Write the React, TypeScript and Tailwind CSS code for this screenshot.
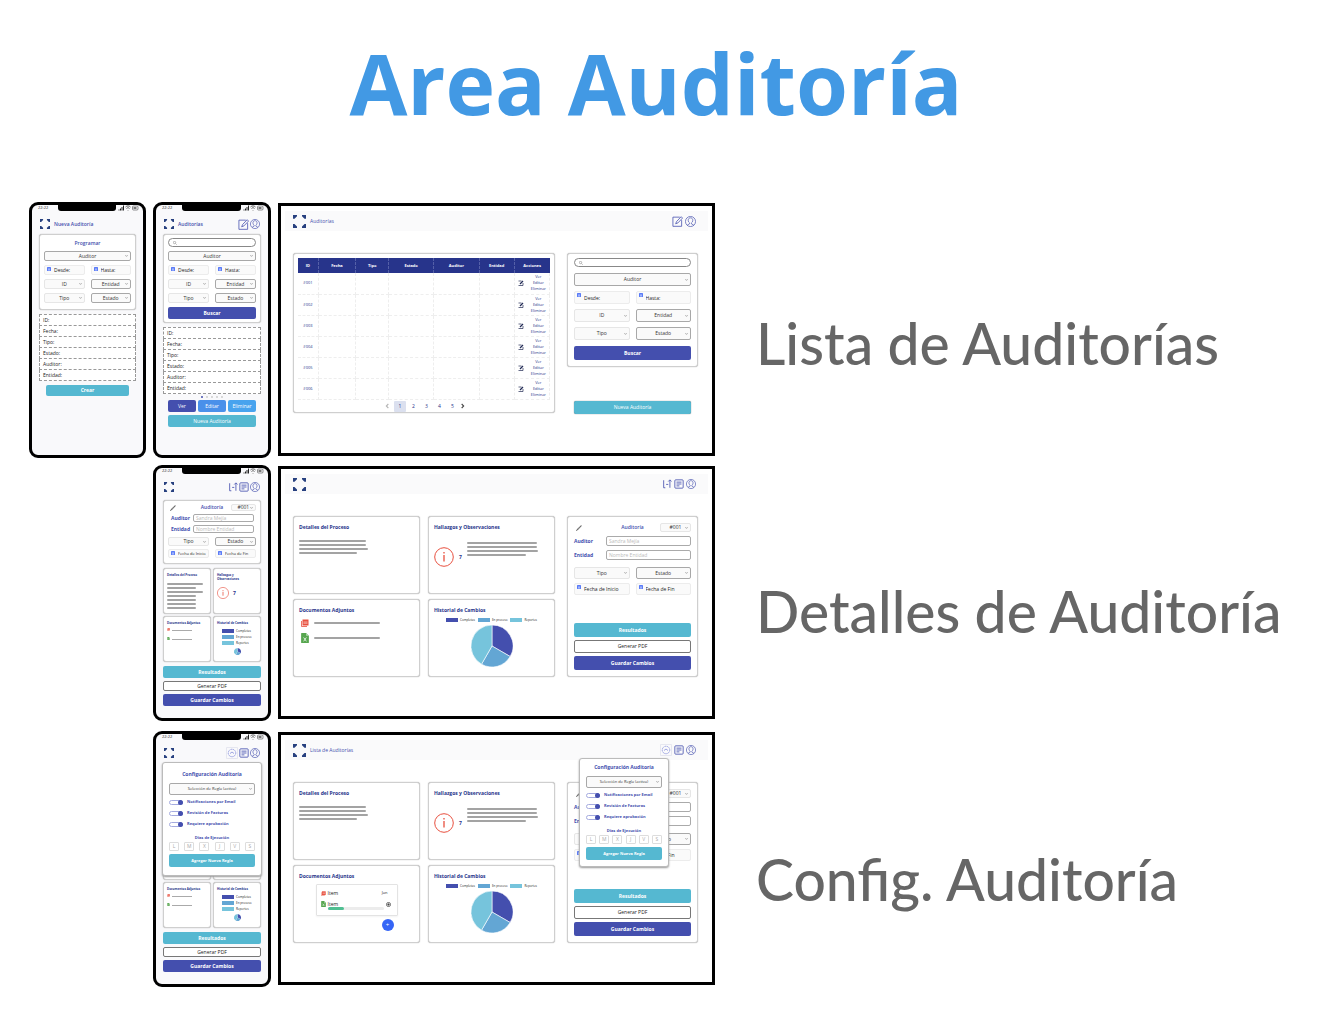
import React, { useId } from "react";

/* ---------- icons ---------- */

function Logo({ className }: { className: string }) {
  return (
    <svg viewBox="0 0 26 26" className={className} fill="#27407f" aria-hidden="true">
      <path d="M0 0h8v2.500L3 7.500H0z M18 0h8v7.500h-3L18 2.500z M0 18h3l5 5v3H0z M26 18h-3l-5 5v3h8z" />
    </svg>
  );
}

function EditIcon({ className }: { className: string }) {
  return (
    <svg viewBox="0 0 24 24" className={className} fill="none" stroke="currentColor" strokeWidth="1.700" aria-hidden="true">
      <path d="M17 2.500H2v20h19V9M8 17l2-5L20 1.500l3 3L13 15z" />
    </svg>
  );
}

function RowEditIcon({ className }: { className: string }) {
  return (
    <svg viewBox="0 0 12 12" className={className} fill="none" stroke="#222b55" strokeWidth="1.400" aria-hidden="true">
      <path d="M1 2h6M1 11h9V6" />
      <path d="M4 8l6-6" strokeWidth="2.500" />
    </svg>
  );
}

function UserIcon({ className }: { className: string }) {
  return (
    <svg viewBox="0 0 24 24" className={className} fill="none" stroke="currentColor" strokeWidth="1.500" aria-hidden="true">
      <circle cx="12" cy="12" r="11" />
      <path d="M12 4c-3 0-5 2.200-5 5.500 0 2.500 1 4.500 3 5.500v2l-5 3M12 4c3 0 5 2.200 5 5.500 0 2.500-1 4.500-3 5.500v2l5 3" />
    </svg>
  );
}

function DocIcon({ className }: { className: string }) {
  return (
    <svg viewBox="0 0 24 24" className={className} fill="none" stroke="currentColor" strokeWidth="2" aria-hidden="true">
      <rect x="2" y="2" width="20" height="20" rx="2" />
      <path d="M6 7.500h12M6 12h12M6 16.500h7" />
    </svg>
  );
}

function FlowIcon({ className }: { className: string }) {
  return (
    <svg viewBox="0 0 24 24" className={className} fill="none" stroke="currentColor" strokeWidth="2" aria-hidden="true">
      <path d="M4 3v18h4M10 13h5M19 21V3M15 6l4-4 4 4" />
    </svg>
  );
}

function GaugeIcon({ className }: { className: string }) {
  return (
    <svg viewBox="0 0 24 24" className={className} fill="none" stroke="#7c86d8" strokeWidth="1.500" aria-hidden="true">
      <rect x="0.700" y="0.700" width="22.600" height="22.600" rx="2" stroke="#d9dbe8" />
      <circle cx="12" cy="12" r="7.500" strokeDasharray="3 1" />
      <path d="M8 13l4-3 4 3" />
    </svg>
  );
}

function PencilIcon({ className }: { className: string }) {
  return (
    <svg viewBox="0 0 12 12" className={className} fill="none" stroke="#333" strokeWidth="1.300" aria-hidden="true">
      <path d="M1 11l1-2L10.500 1l.500.500-8 8.500z" />
    </svg>
  );
}

function Chevron({ className }: { className: string }) {
  return (
    <svg viewBox="0 0 8 6" className={className} fill="none" stroke="#444" strokeWidth="1.600" aria-hidden="true">
      <path d="M1 1l3 3 3-3" />
    </svg>
  );
}

function InfoIcon({ className }: { className: string }) {
  return (
    <svg viewBox="0 0 20 20" className={className} fill="none" stroke="#e8503f" aria-hidden="true">
      <circle cx="10" cy="10" r="9.300" />
      <path d="M10 8v6.500M10 5v1.500" strokeWidth="1.300" />
    </svg>
  );
}

function PdfIcon({ className }: { className: string }) {
  return (
    <svg viewBox="0 0 16 16" className={className} aria-hidden="true">
      <path d="M1 4v11h11" fill="none" stroke="#e8503f" strokeWidth="1.600" />
      <path d="M3 1h12v12H3z" fill="#e8503f" />
      <path d="M5 6h8M5 8.500h8" stroke="#fff" strokeWidth="1" />
    </svg>
  );
}

function SheetIcon({ className }: { className: string }) {
  return (
    <svg viewBox="0 0 14 18" className={className} aria-hidden="true">
      <path d="M1 0h8l5 5v12a1 1 0 0 1-1 1H1a1 1 0 0 1-1-1V1a1 1 0 0 1 1-1z" fill="#57a64f" />
      <path d="M9 0v5h5z" fill="#b5dbb1" />
      <path d="M4.500 8l5 7M9.500 8l-5 7" stroke="#fff" strokeWidth="1.400" />
    </svg>
  );
}

function Pie({ className }: { className: string }) {
  return (
    <svg viewBox="-21 -21 42 42" className={className} stroke="#fff" strokeWidth="0.600" role="img" aria-label="Historial de cambios">
      <path d="M0 0V-21A21 21 0 0 1 18.200 10.500z" fill="#444fae" />
      <path d="M0 0L18.200 10.500A21 21 0 0 1-10.500 18.200z" fill="#63a6d4" />
      <path d="M0 0L-10.500 18.200A21 21 0 0 1 0-21z" fill="#76c4dc" />
    </svg>
  );
}

/* ---------- controls ---------- */

type FieldProps = { label: string; className?: string; strong?: boolean };

function Select({ label, className = "h-[10px]", strong = false }: FieldProps) {
  return (
    <div className={`relative min-w-0 ${className}`}>
      <select
        aria-label={label}
        className={`block h-full w-full appearance-none rounded-[2px] border bg-[#fafafa] px-1 text-[5px] leading-none text-[#333] [text-align-last:center] ${
          strong ? "border-[#a8a8a8]" : "border-[#e6e6e6]"
        }`}
      >
        <option>{label}</option>
      </select>
      <Chevron className="pointer-events-none absolute top-1/2 right-[3px] h-[2px] w-[3px] -translate-y-1/2" />
    </div>
  );
}

function DateField({ label, className = "h-[10px]" }: FieldProps) {
  return (
    <label className={`flex min-w-0 items-center gap-[3px] rounded-[2px] border border-[#ececec] bg-[#fafafa] pl-[2px] ${className}`}>
      <svg viewBox="0 0 8 8" className="mt-px h-1 w-1 shrink-0 self-start" aria-hidden="true">
        <rect width="8" height="8" rx="1" fill="#5b7cf7" />
        <path d="M2 4h4M2 6h4" stroke="#fff" />
      </svg>
      <input
        type="text"
        aria-label={label}
        placeholder={label}
        className="w-full min-w-0 bg-transparent leading-none placeholder:text-[#222]"
      />
    </label>
  );
}

function Search() {
  return (
    <label className="flex h-[9px] items-center rounded-full border border-[#888] bg-white pl-1">
      <svg viewBox="0 0 8 8" className="h-1 w-1 shrink-0" fill="none" stroke="#777" aria-hidden="true">
        <circle cx="3" cy="3" r="2.400" />
        <path d="M5 5l2.500 2.500" />
      </svg>
      <input type="search" aria-label="Buscar" className="w-full min-w-0 bg-transparent text-[5px] leading-none" />
    </label>
  );
}

function Button({
  tone,
  className = "h-3",
  children,
}: {
  tone: "indigo" | "teal" | "plainTeal" | "line" | "plainIndigo" | "blue" | "sky";
  className?: string;
  children: React.ReactNode;
}) {
  const tones = {
    indigo: "bg-[#444fae] font-bold text-white",
    plainIndigo: "bg-[#444fae] text-white",
    teal: "bg-[#55b8d1] font-bold text-white",
    plainTeal: "bg-[#55b8d1] font-medium text-white",
    line: "border border-[#777] bg-white text-[#222]",
    blue: "bg-[#4a90ea] text-white",
    sky: "bg-[#48a3ee] text-white",
  };
  return (
    <button type="button" className={`flex min-w-0 items-center justify-center rounded-[2px] text-[5px] leading-none ${tones[tone]} ${className}`}>
      {children}
    </button>
  );
}

function Card({ className = "", children }: { className?: string; children: React.ReactNode }) {
  return <section className={`min-w-0 rounded-[3px] border border-[#cfcfcf] bg-white shadow-[0_0_1px_#999] ${className}`}>{children}</section>;
}

function NamedInput({ label, placeholder, narrow }: { label: string; placeholder: string; narrow?: boolean }) {
  const id = useId();
  return (
    <div className="flex items-center">
      <label htmlFor={id} className={`shrink-0 text-[5px] leading-none font-bold text-[#444fae] ${narrow ? "w-[25px] text-center" : "w-8"}`}>
        {label}
      </label>
      <input
        id={id}
        type="text"
        placeholder={placeholder}
        className={`w-full min-w-0 rounded-[2px] border border-[#aaa] bg-white px-[2px] text-[5px] leading-none placeholder:text-[#bbb] ${narrow ? "mr-[2px] h-2" : "h-[10px]"}`}
      />
    </div>
  );
}

/* ---------- frames ---------- */

function Phone({ time, children }: { time: string; children: React.ReactNode }) {
  return (
    <article className="relative min-h-64 min-w-0 rounded-[9px] border-[3px] border-black bg-[#f9f9fb]">
      <div className="flex h-[6px] items-start justify-between pr-1 pl-[6px] text-[4px] leading-[6px] text-[#222]">
        <span className="w-5">{time}</span>
        <span className="h-[6px] flex-1 rounded-b-[3px] bg-black" />
        <svg viewBox="0 0 42 12" className="ml-[2px] h-[6px] w-[21px]" fill="none" stroke="#222" aria-hidden="true">
          <path d="M2 11V9M5 11V7M8 11V4M11 11V1" strokeWidth="2" />
          <path d="M15 4c3-3 7-3 10 0M17 7c2-2 4-2 6 0M20 10v1" strokeWidth="1.400" />
          <rect x="29" y="2" width="11" height="8" rx="2" />
          <path d="M31 6h6" strokeWidth="4" stroke="#777" />
        </svg>
      </div>
      {children}
    </article>
  );
}

function PhoneHeader({ title, children }: { title?: string; children?: React.ReactNode }) {
  return (
    <header className="flex h-[23px] items-center px-2 pt-[3px] text-[#444fae]">
      <Logo className="h-[10px] w-[10px]" />
      {title && <h3 className="ml-1 text-[5px] leading-none font-semibold">{title}</h3>}
      <div className="ml-auto flex items-center gap-[1px]">{children}</div>
    </header>
  );
}

function Desktop({ title, icons, children }: { title?: string; icons: React.ReactNode; children: React.ReactNode }) {
  return (
    <article className="relative mt-px min-h-[253px] min-w-0 self-start border-[3px] border-black bg-white px-1 pt-[5px]">
      <header className="flex h-5 items-center bg-[#fafafb] pr-3 pl-2 text-[#444fae]">
        <Logo className="h-[13px] w-[13px]" />
        {title && <h3 className="ml-1 text-[5px] leading-none">{title}</h3>}
        <div className="ml-auto flex items-center gap-[2px]">{icons}</div>
      </header>
      {children}
    </article>
  );
}

/* ---------- audits list ---------- */

function Filters({ wide }: { wide?: boolean }) {
  const h = wide ? "h-[13px] text-[5px]" : "h-[10px] text-[5px]";
  return (
    <div className={wide ? "flex flex-col gap-[5px]" : "flex flex-col gap-1"}>
      <Select label="Auditor" className={h} strong />
      <div className={wide ? "grid grid-cols-2 gap-x-[6px] gap-y-[5px]" : "grid grid-cols-2 gap-x-[6px] gap-y-1"}>
        <DateField label="Desde:" className={h} />
        <DateField label="Hasta:" className={h} />
        <Select label="ID" className={h} />
        <Select label="Entidad" className={h} strong />
        <Select label="Tipo" className={h} />
        <Select label="Estado" className={h} strong />
      </div>
    </div>
  );
}

function RecordTable() {
  return (
    <table className="mx-[7px] mt-1 w-[calc(100%-14px)] border-collapse bg-white text-left text-[5px] leading-[10px] text-[#222]">
      <tbody>
        {["ID:", "Fecha:", "Tipo:", "Estado:", "Auditor:", "Entidad:"].map((row) => (
          <tr key={row}>
            <th scope="row" className="border border-dashed border-[#999] px-[3px] py-0 font-normal">
              {row}
            </th>
          </tr>
        ))}
      </tbody>
    </table>
  );
}

function NewAuditPhone() {
  return (
    <Phone time="22:22">
      <PhoneHeader title="Nueva Auditoría" />
      <Card className="mx-[7px] px-1 pb-[6px]">
        <h4 className="py-[5px] text-center text-[5px] leading-[6px] font-semibold text-[#444fae]">Programar</h4>
        <Filters />
      </Card>
      <RecordTable />
      <Button tone="teal" className="mx-[14px] mt-1 h-[11px] w-[calc(100%-28px)]">
        Crear
      </Button>
    </Phone>
  );
}

function AuditsPhone() {
  return (
    <Phone time="22:22">
      <PhoneHeader title="Auditorías">
        <EditIcon className="h-[11px] w-[11px]" />
        <UserIcon className="h-[10px] w-[10px]" />
      </PhoneHeader>
      <Card className="mx-[7px] flex flex-col gap-1 px-1 pt-[3px] pb-[3px]">
        <Search />
        <Filters />
        <Button tone="indigo">Buscar</Button>
      </Card>
      <RecordTable />
      <div className="flex h-[6px] items-center justify-center gap-[3px]">
        <span className="h-[2px] w-[2px] rounded-full bg-[#444fae]" />
        {[2, 3, 4, 5].map((n) => (
          <span key={n} className="h-[2px] w-[2px] rounded-full bg-[#ccc]" />
        ))}
      </div>
      <div className="mx-3 grid grid-cols-3 gap-x-[2px] gap-y-[3px]">
        <Button tone="plainIndigo">Ver</Button>
        <Button tone="blue">Editar</Button>
        <Button tone="sky">Eliminar</Button>
        <Button tone="plainTeal" className="col-span-3 h-3">
          Nueva Auditoría
        </Button>
      </div>
    </Phone>
  );
}

function AuditsDesktop() {
  const cols = ["ID", "Fecha", "Tipo", "Estado", "Auditor", "Entidad"];
  return (
    <Desktop
      title="Auditorías"
      icons={
        <>
          <EditIcon className="h-[11px] w-[11px]" />
          <UserIcon className="h-[11px] w-[11px]" />
        </>
      }
    >
      <div className="mr-[10px] ml-2 grid grid-cols-[2fr_1fr] items-start gap-3 pt-[22px]">
        <Card className="px-1 pt-1">
          <table className="w-full table-fixed border-collapse text-center text-[4px] leading-[6px] text-[#27348b]">
            <colgroup>
              <col className="w-[8%]" />
              <col className="w-[15%]" />
              <col className="w-[13%]" />
              <col className="w-[18%]" />
              <col className="w-[18%]" />
              <col className="w-[14%]" />
              <col className="w-[14%]" />
            </colgroup>
            <thead className="bg-[#27348b] text-white">
              <tr className="h-[15px]">
                {cols.map((c) => (
                  <th key={c} className="border-r border-dashed border-[#5560a8] font-bold">
                    {c}
                  </th>
                ))}
                <th className="font-bold">Acciones</th>
              </tr>
            </thead>
            <tbody>
              {["#001", "#002", "#003", "#004", "#005", "#006"].map((id) => (
                <tr key={id} className="h-[21px]">
                  {cols.map((c) => (
                    <td key={c} className="border-r border-b border-dashed border-[#eee]">
                      {c === "ID" ? id : ""}
                    </td>
                  ))}
                  <td className="border-r border-b border-dashed border-[#eee] p-0">
                    <div className="flex items-center justify-between px-[3px]">
                      <RowEditIcon className="h-[6px] w-[6px]" />
                      <ul>
                        <li>Ver</li>
                        <li>Editar</li>
                        <li>Eliminar</li>
                      </ul>
                    </div>
                  </td>
                </tr>
              ))}
            </tbody>
          </table>
          <nav aria-label="Páginas" className="mt-px flex items-center justify-center gap-[2px] text-[5px] leading-none text-[#27348b]">
            <button type="button" aria-label="Anterior" className="w-[10px]">
              <Chevron className="mx-auto h-1 w-[6px] rotate-90 opacity-40" />
            </button>
            <button type="button" className="h-[11px] w-3 rounded-[1px] bg-[#dbe0ef]">
              1
            </button>
            {["2", "3", "4", "5"].map((n) => (
              <button key={n} type="button" className="w-[11px]">
                {n}
              </button>
            ))}
            <button type="button" aria-label="Siguiente">
              <Chevron className="h-1 w-[6px] -rotate-90" />
            </button>
          </nav>
        </Card>
        <div className="min-w-0">
          <Card className="flex flex-col gap-[6px] px-[6px] pt-1 pb-[6px]">
            <Search />
            <Filters wide />
            <Button tone="indigo" className="h-[14px]">
              Buscar
            </Button>
          </Card>
          <Button tone="plainTeal" className="mx-[7px] mt-[34px] h-[13px] w-[calc(100%-14px)] shadow-[0_0_1px_#555]">
            Nueva Auditoría
          </Button>
        </div>
      </div>
    </Desktop>
  );
}

/* ---------- audit details ---------- */

function Lines({ widths, className = "" }: { widths: number[]; className?: string }) {
  return (
    <div className={`flex flex-col gap-[2px] ${className}`}>
      {widths.map((w, i) => (
        <span key={i} className="h-[2px] rounded-full bg-[#a3a3a3]" style={{ width: `${w}%` }} />
      ))}
    </div>
  );
}

function DetailsForm({ narrow }: { narrow?: boolean }) {
  const h = narrow ? "h-[9px] text-[4px]" : "h-3 text-[5px]";
  return (
    <div className={narrow ? "flex flex-col gap-[3px]" : "flex flex-col gap-1"}>
      <div className={narrow ? "grid h-[7px] grid-cols-3 items-center" : "grid h-[9px] grid-cols-3 items-center"}>
        <PencilIcon className="ml-[2px] h-[6px] w-[6px]" />
        <h4 className="text-center text-[5px] leading-none font-semibold text-[#444fae]">Auditoría</h4>
        <Select label="#001" className={narrow ? "ml-1 h-[7px]" : "ml-2 h-[9px]"} />
      </div>
      <NamedInput label="Auditor" placeholder="Sandra Mejía" narrow={narrow} />
      <NamedInput label="Entidad" placeholder="Nombre Entidad" narrow={narrow} />
      <div className={narrow ? "mt-px grid grid-cols-2 gap-x-[6px] gap-y-[3px]" : "mt-[3px] grid grid-cols-2 gap-x-[6px] gap-y-1"}>
        <Select label="Tipo" className={h} />
        <Select label="Estado" className={h} strong />
        <DateField label="Fecha de Inicio" className={h} />
        <DateField label="Fecha de Fin" className={h} />
      </div>
    </div>
  );
}

const LEGEND = [
  { name: "Completas", color: "bg-[#444fae]" },
  { name: "En proceso", color: "bg-[#63a6d4]" },
  { name: "Reportes", color: "bg-[#76c4dc]" },
];

function SmallTitle({ children }: { children: React.ReactNode }) {
  return <h4 className="text-[3px] leading-1 font-bold text-[#27348b]">{children}</h4>;
}

function DetailsPhone({ icons, children }: { icons: React.ReactNode; children?: React.ReactNode }) {
  return (
    <Phone time="22:22">
      <PhoneHeader>{icons}</PhoneHeader>
      {children}
      <div className="mx-[7px] mt-[3px]">
        <Card className="px-1 pt-[3px] pb-[5px]">
          <DetailsForm narrow />
        </Card>
        <div className="mt-1 grid auto-rows-[46px] grid-cols-2 gap-[2px]">
          <Card className="px-[3px] pt-1">
            <SmallTitle>Detalles del Proceso</SmallTitle>
            <Lines widths={[90, 72, 90, 72, 72, 72, 72]} className="mt-[6px]" />
          </Card>
          <Card className="px-[3px] pt-1">
            <SmallTitle>
              Hallazgos y<br />
              Observaciones
            </SmallTitle>
            <div className="mt-[6px] flex items-center gap-1 text-[5px] leading-none font-bold text-[#27348b]">
              <InfoIcon className="h-3 w-3" />7
            </div>
          </Card>
          <Card className="px-[3px] pt-1">
            <SmallTitle>Documentos Adjuntos</SmallTitle>
            <div className="mt-[3px] flex items-end gap-[2px]">
              <PdfIcon className="h-[3px] w-[3px]" />
              <span className="h-px w-5 bg-[#aaa]" />
            </div>
            <div className="mt-[6px] flex items-end gap-[2px]">
              <SheetIcon className="h-[3px] w-[3px]" />
              <span className="h-px w-5 bg-[#aaa]" />
            </div>
          </Card>
          <Card className="px-[3px] pt-1">
            <SmallTitle>Historial de Cambios</SmallTitle>
            <ul className="mt-1 ml-[5px] flex flex-col gap-[2px] text-[3px] leading-1 text-[#222]">
              {LEGEND.map((l) => (
                <li key={l.name} className="flex items-center gap-[2px]">
                  <span className={`h-1 w-3 ${l.color}`} />
                  {l.name}
                </li>
              ))}
            </ul>
            <Pie className="mx-auto mt-[3px] h-[7px] w-[7px]" />
          </Card>
        </div>
        <div className="mt-1 flex flex-col gap-[3px]">
          <Button tone="teal">Resultados</Button>
          <Button tone="line" className="h-[10px]">
            Generar PDF
          </Button>
          <Button tone="indigo">Guardar Cambios</Button>
        </div>
      </div>
    </Phone>
  );
}

function Title({ children }: { children: React.ReactNode }) {
  return <h4 className="text-[5px] leading-[6px] font-bold text-[#27348b]">{children}</h4>;
}

function DetailsDesktop({
  title,
  icons,
  documents,
  children,
}: {
  title?: string;
  icons: React.ReactNode;
  documents: React.ReactNode;
  children?: React.ReactNode;
}) {
  return (
    <Desktop title={title} icons={icons}>
      {children}
      <div className="mr-[10px] ml-2 grid grid-cols-[2fr_1fr] gap-3 pt-[22px]">
        <div className="grid min-w-0 auto-rows-[78px] grid-cols-2 gap-x-2 gap-y-[5px]">
          <Card className="px-[5px] pt-[7px]">
            <Title>Detalles del Proceso</Title>
            <Lines widths={[58, 58, 60, 50]} className="mt-[10px]" />
          </Card>
          <Card className="px-[5px] pt-[7px]">
            <Title>Hallazgos y Observaciones</Title>
            <div className="mt-3 flex gap-[5px] text-[5px] font-bold text-[#27348b]">
              <InfoIcon className="mt-[5px] h-5 w-5 shrink-0" />
              <span className="mt-3 leading-[6px]">7</span>
              <Lines widths={[85, 85, 87, 72]} className="flex-1" />
            </div>
          </Card>
          <Card className="px-[5px] pt-[7px]">
            <Title>Documentos Adjuntos</Title>
            {documents}
          </Card>
          <Card className="px-[5px] pt-[7px]">
            <Title>Historial de Cambios</Title>
            <ul className="mt-[5px] ml-3 flex gap-[3px] text-[3px] leading-1 text-[#222]">
              {LEGEND.map((l) => (
                <li key={l.name} className="flex items-center gap-[2px] whitespace-nowrap">
                  <span className={`h-1 w-3 ${l.color}`} />
                  {l.name}
                </li>
              ))}
            </ul>
            <Pie className="mx-auto mt-[3px] h-[42px] w-[42px]" />
          </Card>
        </div>
        <Card className="px-[6px] pt-[6px] pb-1">
          <DetailsForm />
          <div className="mt-7 flex flex-col gap-[3px]">
            <Button tone="teal" className="h-[14px]">
              Resultados
            </Button>
            <Button tone="line" className="h-[13px]">
              Generar PDF
            </Button>
            <Button tone="indigo" className="h-[14px]">
              Guardar Cambios
            </Button>
          </div>
        </Card>
      </div>
    </Desktop>
  );
}

function FileLines() {
  return (
    <ul className="mt-[6px] ml-[2px] flex flex-col gap-[6px]">
      <li className="flex items-center gap-[5px]">
        <PdfIcon className="h-2 w-2" />
        <span className="h-[2px] w-[66px] rounded-full bg-[#a3a3a3]" />
      </li>
      <li className="flex items-center gap-[5px]">
        <SheetIcon className="h-[10px] w-2" />
        <span className="h-[2px] w-[66px] rounded-full bg-[#a3a3a3]" />
      </li>
    </ul>
  );
}

function FileUpload() {
  return (
    <div className="mx-auto mt-[5px] w-[82px]">
      <ul className="flex h-8 flex-col justify-between rounded-[1px] border border-[#e3e3e3] px-1 py-[5px] text-[5px] leading-[6px] text-[#222] shadow-xs">
        <li className="flex items-center gap-[2px]">
          <PdfIcon className="h-[5px] w-[5px]" />
          Item
          <span className="mr-[5px] ml-auto text-[4px]">Jan</span>
        </li>
        <li className="grid grid-cols-[5px_1fr_auto] items-center gap-x-[2px]">
          <SheetIcon className="h-[6px] w-[5px]" />
          Item
          <svg viewBox="0 0 8 8" className="mr-[2px] h-[5px] w-[5px]" fill="none" stroke="#222" aria-hidden="true">
            <circle cx="4" cy="4" r="3.300" />
            <path d="M4 2v4M2 4h4" />
          </svg>
          <span className="col-start-2 h-[3px] rounded-full bg-[#ececec]">
            <span className="block h-full w-[30%] rounded-full bg-[#4fbf92]" />
          </span>
        </li>
      </ul>
      <button
        type="button"
        aria-label="Agregar"
        className="mt-[3px] mr-1 ml-auto flex h-3 w-3 items-center justify-center rounded-full bg-[#3565f6] text-[6px] leading-none text-white"
      >
        +
      </button>
    </div>
  );
}

/* ---------- audit settings ---------- */

function Settings({ className }: { className: string }) {
  return (
    <section className={`absolute z-10 rounded-[3px] border border-[#bbb] bg-white shadow-[0_1px_2px_#999] ${className}`}>
      <h4 className="text-center text-[5px] leading-[6px] font-bold text-[#444fae]">Configuración Auditoría</h4>
      <Select label="Selección de Regla (activa)" className="mt-[6px] h-3 [&>select]:text-[4px]" strong />
      <div className="mt-1 flex flex-col gap-[5px]">
        {["Notificaciones por Email", "Revisión de Facturas", "Requiere aprobación"].map((text) => (
          <label key={text} className="flex items-center gap-1 text-[4px] leading-[6px] font-bold whitespace-nowrap text-[#444fae]">
            <span className="relative flex h-[5px] w-[14px]">
              <input type="checkbox" role="switch" defaultChecked className="h-full w-full appearance-none rounded-full border border-[#a5abdf] bg-white" />
              <span className="absolute right-0 h-[5px] w-[5px] rounded-full bg-[#444fae]" />
            </span>
            {text}
          </label>
        ))}
      </div>
      <h5 className="mt-2 text-center text-[4px] leading-[6px] font-bold text-[#444fae]">Días de Ejecución</h5>
      <div className="mt-px flex justify-between">
        {["L", "M", "X", "J", "V", "S"].map((d) => (
          <button key={d} type="button" className="h-[9px] w-[10px] rounded-[1px] border border-[#ddd] text-[5px] leading-none text-[#aaa]">
            {d}
          </button>
        ))}
      </div>
      <Button tone="teal" className="mt-[3px] h-[13px] w-full">
        <span className="text-[4px]">Agregar Nueva Regla</span>
      </Button>
    </section>
  );
}

const ROW = "grid grid-cols-[minmax(0,117fr)_minmax(0,118fr)_minmax(0,437fr)] gap-x-[7px]";

export default function App() {
  const detailIcons = (
    <>
      <FlowIcon className="h-[10px] w-[10px]" />
      <DocIcon className="h-[10px] w-[10px]" />
      <UserIcon className="h-[10px] w-[10px]" />
    </>
  );
  const settingsIcons = (
    <>
      <GaugeIcon className="h-3 w-3" />
      <DocIcon className="h-[10px] w-[10px]" />
      <UserIcon className="h-[10px] w-[10px]" />
    </>
  );
  return (
    <main className="min-h-screen bg-white px-[29px] pb-9 font-['Open_Sans',sans-serif]">
      <h1 className="pt-[23px] pr-[10px] pb-[59px] text-center text-[84px] leading-[120px] font-bold text-[#4299e4]">Area Auditoría</h1>
      <div className="grid grid-cols-[minmax(0,686fr)_minmax(0,578fr)]">
        <div>
          <div className={ROW}>
            <NewAuditPhone />
            <AuditsPhone />
            <AuditsDesktop />
          </div>
          <div className={`${ROW} mt-[7px]`}>
            <div className="col-start-2 grid">
              <DetailsPhone icons={detailIcons} />
            </div>
            <DetailsDesktop icons={detailIcons} documents={<FileLines />} />
          </div>
          <div className={`${ROW} mt-[10px]`}>
            <div className="col-start-2 grid">
              <DetailsPhone icons={settingsIcons}>
                <Settings className="top-7 right-[6px] left-[6px] px-[6px] pt-2 pb-2" />
              </DetailsPhone>
            </div>
            <DetailsDesktop title="Lista de Auditorías" icons={settingsIcons} documents={<FileUpload />}>
              <Settings className="top-[23px] right-[43px] w-[90px] px-[6px] pt-[5px] pb-[6px]" />
            </DetailsDesktop>
          </div>
        </div>
        <div className="flex flex-col gap-[198px] pt-[106px] pl-[41px] font-['Lato',sans-serif] text-[57px] leading-[70px] font-medium whitespace-nowrap text-[#666]">
          <h2>Lista de Auditorías</h2>
          <h2>Detalles de Auditoría</h2>
          <h2>Config. Auditoría</h2>
        </div>
      </div>
    </main>
  );
}
